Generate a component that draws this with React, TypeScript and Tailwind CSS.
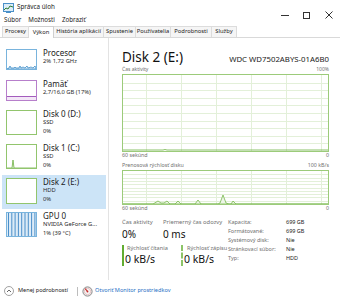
import React from "react";

function GridGraph({
  w,
  h,
  rows,
  children,
}: {
  w: number;
  h: number;
  rows: number;
  children?: React.ReactNode;
}) {
  const hl: number[] = [];
  for (let i = 1; i < rows; i++) hl.push(Math.round((h * i) / rows) + 0.5);
  const vl = [23, 58, 93, 128, 163, 198].map((x) => x + 0.5);
  return (
    <div className="border border-[#9ccb7a] bg-white">
      <svg width={w} height={h} className="block">
        {hl.map((y) => (
          <line key={"h" + y} x1={0} x2={w} y1={y} y2={y} stroke="#e3f0d9" strokeWidth={1} />
        ))}
        {vl.map((x) => (
          <line key={"v" + x} x1={x} x2={x} y1={0} y2={h} stroke="#e3f0d9" strokeWidth={1} />
        ))}
        {children}
      </svg>
    </div>
  );
}

function Thumb({
  cls,
  border,
  children,
}: {
  cls: string;
  border: string;
  children?: React.ReactNode;
}) {
  return (
    <div className={`w-[31px] shrink-0 border bg-white ${border} ${cls}`}>
      <svg className="block w-full h-full">{children}</svg>
    </div>
  );
}

function Item({
  title,
  lines,
  thumb,
  selected,
  h,
  textCls,
}: {
  title: string;
  lines: string[];
  thumb: React.ReactNode;
  selected?: boolean;
  h: string;
  textCls: string;
}) {
  return (
    <div className={`flex mx-[2px] pl-[4px] ${h} ${selected ? "bg-[#cce4f7]" : ""}`}>
      {thumb}
      <div className={`ml-[6px] flex flex-col ${textCls}`}>
        <div className="h-[10px] flex items-center text-[8px] leading-none text-[#1a1a1a] whitespace-nowrap">{title}</div>
        {lines.map((l) => (
          <div key={l} className="h-[8.5px] flex items-center text-[5.8px] leading-none text-[#2a2a2a] whitespace-nowrap">
            {l}
          </div>
        ))}
      </div>
    </div>
  );
}

export default function App() {
  const gpuLines: number[] = [];
  for (let x = 1.5; x < 29; x += 3.3) gpuLines.push(x);
  return (
    <div className="w-[340px] h-[303px] bg-white flex flex-col overflow-hidden font-['Segoe_UI','Noto_Sans',sans-serif] text-black">
      {/* header */}
      <div className="flex h-[26px]">
        <div className="flex flex-col">
          <div className="h-[15px] flex items-center pl-[3px]">
            <svg width="11" height="10" viewBox="0 0 11 10" className="block">
              <rect x="0.5" y="0.5" width="10" height="8" fill="#dcecf8" stroke="#4a90c8" />
              <polyline points="1,7 3,5 5,6 7,3 10,4" fill="none" stroke="#2e7d32" strokeWidth="1" />
              <rect x="3" y="9" width="5" height="1" fill="#4a90c8" />
            </svg>
            <span className="ml-[3px] text-[6.3px] leading-none text-[#222]">Správca úloh</span>
          </div>
          <div className="h-[11px] flex items-center pl-[4px] gap-[7px] text-[6.2px] leading-none text-[#222]">
            <span>Súbor</span>
            <span>Možnosti</span>
            <span>Zobraziť</span>
          </div>
        </div>
        <div className="ml-auto flex items-start pt-[11px] pr-[7px]">
          <svg width="8" height="8" viewBox="0 0 8 8" className="block">
            <line x1="0" x2="8" y1="4.5" y2="4.5" stroke="#333" strokeWidth="1" />
          </svg>
          <svg width="8" height="8" viewBox="0 0 8 8" className="block ml-[13px]">
            <rect x="1.5" y="1.5" width="6" height="6" fill="none" stroke="#333" strokeWidth="1" />
          </svg>
          <svg width="8" height="8" viewBox="0 0 8 8" className="block ml-[15px]">
            <line x1="0.5" y1="0.5" x2="7.5" y2="7.5" stroke="#333" strokeWidth="1" />
            <line x1="7.5" y1="0.5" x2="0.5" y2="7.5" stroke="#333" strokeWidth="1" />
          </svg>
        </div>
      </div>

      {/* tabs */}
      <div className="h-[12px] flex items-end border-b border-[#d9d9d9] pl-[2px] text-[5.8px] leading-none text-[#222] whitespace-nowrap">
        <div className="w-[27px] h-[11px] flex items-center justify-center bg-[#f5f5f5] border border-b-0 border-[#dcdcdc]">Procesy</div>
        <div className="w-[25px] h-[12px] flex items-center justify-center bg-white border border-b-0 border-l-0 border-[#cfcfcf] -mb-px">Výkon</div>
        <div className="w-[50px] h-[11px] flex items-center justify-center bg-[#f5f5f5] border border-b-0 border-l-0 border-[#dcdcdc]">História aplikácií</div>
        <div className="w-[32px] h-[11px] flex items-center justify-center bg-[#f5f5f5] border border-b-0 border-l-0 border-[#dcdcdc]">Spustenie</div>
        <div className="w-[35px] h-[11px] flex items-center justify-center bg-[#f5f5f5] border border-b-0 border-l-0 border-[#dcdcdc]">Používatelia</div>
        <div className="w-[41px] h-[11px] flex items-center justify-center bg-[#f5f5f5] border border-b-0 border-l-0 border-[#dcdcdc]">Podrobnosti</div>
        <div className="w-[25px] h-[11px] flex items-center justify-center bg-[#f5f5f5] border border-b-0 border-l-0 border-[#dcdcdc]">Služby</div>
      </div>

      {/* main */}
      <div className="h-[242px] flex">
        <div className="w-[109px] shrink-0 border-r border-[#e3e3e3] pt-[7px] flex flex-col">
          <Item
            title="Procesor"
            lines={["2% 1,72 GHz"]}
            h="h-[31px]"
            textCls="mt-[3px]"
            thumb={
              <Thumb cls="h-[21px] mt-[4px]" border="border-[#79b4dd]">
                <polygon
                  points="0,19 2,18 3,16 4,18 7,18 8,17 9,18 12,18 13,16 14,18 16,17 18,18 20,16 21,18 24,17 26,18 28,16 29,18 29,19"
                  fill="#e6f1fa"
                  stroke="#3d8dc8"
                  strokeWidth="0.8"
                />
              </Thumb>
            }
          />
          <Item
            title="Pamäť"
            lines={["2,7/16,0 GB (17%)"]}
            h="h-[31px]"
            textCls="mt-[3px]"
            thumb={
              <Thumb cls="h-[21px] mt-[4px]" border="border-[#b77fcb]">
                <rect x="0" y="15.5" width="29" height="4" fill="#f3e7f7" />
                <line x1="0" x2="29" y1="15.5" y2="15.5" stroke="#a45cbd" strokeWidth="1" />
              </Thumb>
            }
          />
          <Item
            title="Disk 0 (D:)"
            lines={["SSD", "0%"]}
            h="h-[34px]"
            textCls="mt-[2px]"
            thumb={<Thumb cls="h-[25px] mt-[3px]" border="border-[#92c56d]" />}
          />
          <Item
            title="Disk 1 (C:)"
            lines={["SSD", "0%"]}
            h="h-[34px]"
            textCls="mt-[2px]"
            thumb={
              <Thumb cls="h-[25px] mt-[3px]" border="border-[#92c56d]">
                <polyline points="0,23 5,23 6,15 7,23 29,23" fill="#eef6e8" stroke="#6bb03f" strokeWidth="0.8" />
              </Thumb>
            }
          />
          <Item
            title="Disk 2 (E:)"
            lines={["HDD", "0%"]}
            selected
            h="h-[34px]"
            textCls="mt-[2px]"
            thumb={<Thumb cls="h-[26px] mt-[3px]" border="border-[#92c56d]" />}
          />
          <Item
            title="GPU 0"
            lines={["NVIDIA GeForce G...", "1% (39 °C)"]}
            h="h-[34px]"
            textCls="mt-[2px]"
            thumb={
              <Thumb cls="h-[25px] mt-[3px]" border="border-[#79b4dd]">
                <rect x="0" y="0" width="29" height="23" fill="#dcebf7" />
                {gpuLines.map((x) => (
                  <line key={x} x1={x} x2={x} y1={0} y2={23} stroke="#4b8fc9" strokeWidth="1" />
                ))}
              </Thumb>
            }
          />
        </div>

        {/* right */}
        <div className="flex-1 pl-[13px] pr-[11px] pt-[7px] flex flex-col">
          <div className="h-[20px] flex items-end justify-between">
            <span className="text-[13.5px] leading-[16px] text-[#111]">Disk 2 (E:)</span>
            <span className="text-[7.8px] leading-[10px] text-[#222] mb-[1px]">WDC WD7502ABYS-01A6B0</span>
          </div>
          <div className="h-[9px] flex items-center justify-between text-[5px] leading-none text-[#707070]">
            <span>Čas aktivity</span>
            <span>100%</span>
          </div>
          <GridGraph w={205} h={76} rows={10}>
            <polyline points="0,75 40,75 42,74.5 44,75 205,75" fill="none" stroke="#6bb03f" strokeWidth="0.8" />
          </GridGraph>
          <div className="h-[8px] flex items-center justify-between text-[5.3px] leading-none text-[#707070]">
            <span>60 sekúnd</span>
            <span>0</span>
          </div>
          <div className="h-[8px] mt-[2px] flex items-center justify-between text-[5.3px] leading-none text-[#707070]">
            <span>Prenosová rýchlosť disku</span>
            <span>100 kB/s</span>
          </div>
          <GridGraph w={205} h={33} rows={10}>
            <polygon
              points="0,33 30,33 35,30 38,32 41,32 44,30 47,33 52,33 55,30 58,33 72,33 75,29 78,33 95,33 97,32 100,24 103,32 106,33 108,33 110,30 113,33 205,33"
              fill="#eef6e8"
              stroke="#77b84c"
              strokeWidth="0.8"
            />
          </GridGraph>
          <div className="h-[8px] flex items-center justify-between text-[5.3px] leading-none text-[#707070]">
            <span>60 sekúnd</span>
            <span>0</span>
          </div>

          {/* stats */}
          <div className="flex mt-[5px]">
            <div className="w-[106px] shrink-0 flex flex-col">
              <div className="flex">
                <div className="w-[41px] flex flex-col">
                  <span className="h-[9px] flex items-center text-[5.8px] leading-none text-[#707070] whitespace-nowrap">Čas aktivity</span>
                  <span className="h-[13px] flex items-center text-[10px] leading-none text-[#111]">0%</span>
                </div>
                <div className="w-[65px] flex flex-col">
                  <span className="h-[9px] flex items-center text-[5.8px] leading-none text-[#707070] whitespace-nowrap">Priemerný čas odozvy</span>
                  <span className="h-[13px] flex items-center text-[10px] leading-none text-[#111]">0 ms</span>
                </div>
              </div>
              <div className="flex mt-[5px]">
                <div className="w-[59px] border-l-2 border-[#62ad32] pl-[3px] flex flex-col h-[21px]">
                  <span className="h-[8px] flex items-center text-[5.6px] leading-none text-[#707070] whitespace-nowrap">Rýchlosť čítania</span>
                  <span className="h-[13px] flex items-center text-[10.5px] leading-none text-[#111] -ml-[2px]">0 kB/s</span>
                </div>
                <div className="w-[47px] border-l-2 border-dashed border-[#8cc468] pl-[4px] flex flex-col h-[21px]">
                  <span className="h-[8px] flex items-center text-[5.6px] leading-none text-[#707070] whitespace-nowrap">Rýchlosť zápisu</span>
                  <span className="h-[13px] flex items-center text-[10.5px] leading-none text-[#111] -ml-[3px]">0 kB/s</span>
                </div>
              </div>
            </div>
            <div className="grid grid-cols-[58px_auto] auto-rows-[9px] items-center text-[5.5px] leading-none">
              <span className="text-[#707070]">Kapacita:</span>
              <span className="text-[#222]">699 GB</span>
              <span className="text-[#707070]">Formátované:</span>
              <span className="text-[#222]">699 GB</span>
              <span className="text-[#707070]">Systémový disk:</span>
              <span className="text-[#222]">Nie</span>
              <span className="text-[#707070]">Stránkovací súbor:</span>
              <span className="text-[#222]">Nie</span>
              <span className="text-[#707070]">Typ:</span>
              <span className="text-[#222]">HDD</span>
            </div>
          </div>
        </div>
      </div>

      {/* bottom bar */}
      <div className="h-[20px] mt-[1px] flex items-center pl-[4px] text-[5.6px] leading-none">
        <svg width="10" height="10" viewBox="0 0 10 10" className="block">
          <circle cx="5" cy="5" r="4.5" fill="none" stroke="#8a8a8a" strokeWidth="0.8" />
          <polyline points="3,6 5,4 7,6" fill="none" stroke="#555" strokeWidth="0.9" />
        </svg>
        <span className="ml-[4px] text-[#222]">Menej podrobností</span>
        <span className="ml-[9px] w-px h-[9px] bg-[#bdbdbd]" />
        <svg width="11" height="11" viewBox="0 0 11 11" className="block ml-[4px]">
          <circle cx="5.5" cy="5.5" r="4.6" fill="#f4f4f4" stroke="#7a7a7a" strokeWidth="0.9" />
          <circle cx="5.5" cy="5.5" r="3.2" fill="none" stroke="#d9a0a0" strokeWidth="0.6" />
          <line x1="5.5" y1="5.5" x2="3.2" y2="2.6" stroke="#c62828" strokeWidth="1.1" />
          <circle cx="5.5" cy="5.5" r="0.9" fill="#c62828" />
        </svg>
        <span className="ml-[2px] text-[#1f6fc5]">Otvoriť Monitor prostriedkov</span>
      </div>
    </div>
  );
}
